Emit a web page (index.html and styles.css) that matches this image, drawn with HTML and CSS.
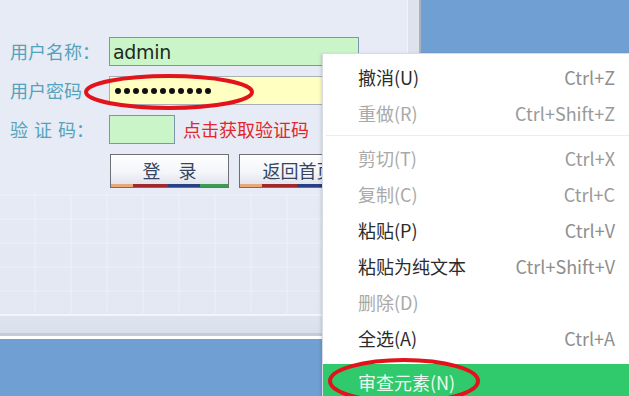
FILE: index.html
```html
<!DOCTYPE html>
<html lang="zh">
<head>
<meta charset="utf-8">
<link rel="stylesheet" href="styles.css">
</head>
<body>
<div class="window">
  <div class="main">
    <div class="form-area">
      <div class="form">
        <label class="label">用户名称：</label>
        <div class="input input-green input-wide"><span class="value">admin</span></div>

        <label class="label">用户密码</label>
        <div class="input input-yellow input-wide">
          <span class="dots"><i></i><i></i><i></i><i></i><i></i><i></i><i></i><i></i><i></i><i></i><i></i></span>
        </div>

        <label class="label label-spaced">验&nbsp;证&nbsp;码：</label>
        <div class="captcha-row">
          <div class="input input-green input-small"></div>
          <span class="captcha-link">点击获取验证码</span>
        </div>

        <span></span>
        <div class="buttons">
          <button class="btn"><span class="btn-text">登&emsp;录</span><span class="stripe"><b class="s1"></b><b class="s2"></b><b class="s3"></b><b class="s4"></b></span></button>
          <button class="btn"><span class="btn-text">返回首页</span><span class="stripe"><b class="s1"></b><b class="s2"></b><b class="s3"></b><b class="s4"></b></span></button>
        </div>
      </div>
      <div class="keyboard"></div>
    </div>
    <div class="edge"></div>
  </div>
  <div class="footer"></div>
</div>

<ul class="menu">
  <li class="item"><span>撤消(U)</span><span class="key">Ctrl+Z</span></li>
  <li class="item disabled"><span>重做(R)</span><span class="key">Ctrl+Shift+Z</span></li>
  <li class="sep"></li>
  <li class="item disabled"><span>剪切(T)</span><span class="key">Ctrl+X</span></li>
  <li class="item disabled"><span>复制(C)</span><span class="key">Ctrl+C</span></li>
  <li class="item"><span>粘贴(P)</span><span class="key">Ctrl+V</span></li>
  <li class="item"><span>粘贴为纯文本</span><span class="key">Ctrl+Shift+V</span></li>
  <li class="item disabled"><span>删除(D)</span><span class="key"></span></li>
  <li class="item"><span>全选(A)</span><span class="key">Ctrl+A</span></li>
  <li class="sep sep-blank"></li>
  <li class="item active"><span>审查元素(N)</span><span class="key"></span></li>
</ul>

<svg class="marks" width="629" height="396" viewBox="0 0 629 396">
  <ellipse cx="169" cy="92" rx="83" ry="16" fill="none" stroke="#e3131b" stroke-width="4"/>
  <ellipse cx="404" cy="381" rx="74" ry="21" fill="none" stroke="#e3131b" stroke-width="4"/>
</svg>
</body>
</html>
```

FILE: styles.css
```css
* { box-sizing: border-box; }

html, body {
  margin: 0;
  padding: 0;
}

body {
  width: 629px;
  height: 396px;
  overflow: hidden;
  position: relative;
  background: #6f9fd3;
  font-family: "Noto Sans CJK SC", "Noto Sans", sans-serif;
}

.window {
  width: 421px;
  height: 339px;
  display: flex;
  flex-direction: column;
  background: #e7ebf5;
}

.main {
  flex: 1;
  display: flex;
}

.form-area {
  flex: 1;
  display: flex;
  flex-direction: column;
}

.form {
  display: grid;
  grid-template-columns: 99px auto;
  row-gap: 10px;
  align-items: center;
  padding: 37px 0 0 10px;
}

.label {
  font-size: 18px;
  line-height: 29px;
  color: #55a3bb;
  white-space: nowrap;
}

.label-spaced {
  word-spacing: 2px;
}

.input {
  height: 29px;
  border: 1px solid #7f95ad;
  display: flex;
  align-items: center;
  padding-left: 3px;
}

.input-green { background: #c9f5c9; }
.input-yellow { background: #ffffc2; border-color: #a9b0b8; }
.input-wide { width: 250px; }
.input-small { width: 66px; }

.value {
  font-family: "DejaVu Sans", sans-serif;
  font-size: 19px;
  color: #1e2a1e;
  letter-spacing: -0.3px;
}

.dots {
  display: flex;
  gap: 3px;
  padding-left: 2px;
}

.dots i {
  width: 6px;
  height: 6px;
  border-radius: 50%;
  background: #111;
  display: block;
}

.captcha-row {
  display: flex;
  align-items: center;
  gap: 8px;
}

.captcha-link {
  font-size: 18px;
  color: #e2262b;
  line-height: 29px;
}

.buttons {
  display: flex;
  gap: 10px;
  padding-left: 1px;
}

.btn {
  width: 119px;
  height: 34px;
  padding: 0;
  border: 1px solid #6d6f75;
  background: linear-gradient(#ffffff, #f3f5f9 55%, #dde1e9);
  display: flex;
  flex-direction: column;
  font-family: "Noto Sans CJK SC", sans-serif;
}

.btn-text {
  flex: 1;
  display: flex;
  align-items: center;
  justify-content: center;
  font-size: 18px;
  color: #354560;
  padding-top: 1px;
}

.stripe {
  height: 3px;
  width: 100%;
  display: flex;
}

.stripe b { display: block; height: 3px; }
.stripe .s1 { width: 22px; background: #e9a878; }
.stripe .s2 { width: 35px; background: #a3282b; }
.stripe .s3 { width: 32px; background: #283f86; }
.stripe .s4 { flex: 1; background: #3d9a53; }

.keyboard {
  flex: 1;
  margin-top: 6px;
  background:
    repeating-linear-gradient(90deg, transparent 0 34px, rgba(255,255,255,0.18) 34px 36px),
    repeating-linear-gradient(0deg, transparent 0 22px, rgba(255,255,255,0.18) 22px 24px),
    linear-gradient(#e6eaf4, #e2e7f2);
  border-bottom: 1px solid #f3f5fa;
}

.edge {
  width: 14px;
  background: #dde2ec;
  border-left: 1px solid #f1f3f8;
  border-right: 2px solid #a6b1c2;
}

.footer {
  height: 24px;
  background: linear-gradient(#dde3ef, #d9dfeb);
  border-top: 1px solid #f2f4f9;
  border-bottom: 3px solid #ffffff;
  box-shadow: inset 0 -3px 0 #c4cbd9;
}

.menu {
  position: absolute;
  left: 322px;
  top: 53px;
  width: 320px;
  height: 360px;
  margin: 0;
  padding: 5px 0 0 0;
  list-style: none;
  background: #ffffff;
  border: 1px solid #d8dce2;
  box-shadow: -1px 1px 3px rgba(0,0,0,0.15);
}

.item {
  height: 36px;
  display: flex;
  align-items: center;
  justify-content: space-between;
  padding: 0 15px 0 35px;
  font-size: 18px;
  color: #2b2b2b;
  width: 307px;
}

.item .key {
  color: #8e8e8e;
}

.item.disabled {
  color: #a9a9a9;
}

.item.disabled .key {
  color: #9a9a9a;
}

.item.active {
  background: #30c96c;
  color: #eaf9ef;
  width: 100%;
}

.sep {
  height: 9px;
  margin: 0 0 0 3px;
  background: linear-gradient(transparent 4px, #ececec 4px 5px, transparent 5px);
}

.sep-blank {
  height: 8px;
  background: none;
}

.marks {
  position: absolute;
  left: 0;
  top: 0;
  pointer-events: none;
}
```
